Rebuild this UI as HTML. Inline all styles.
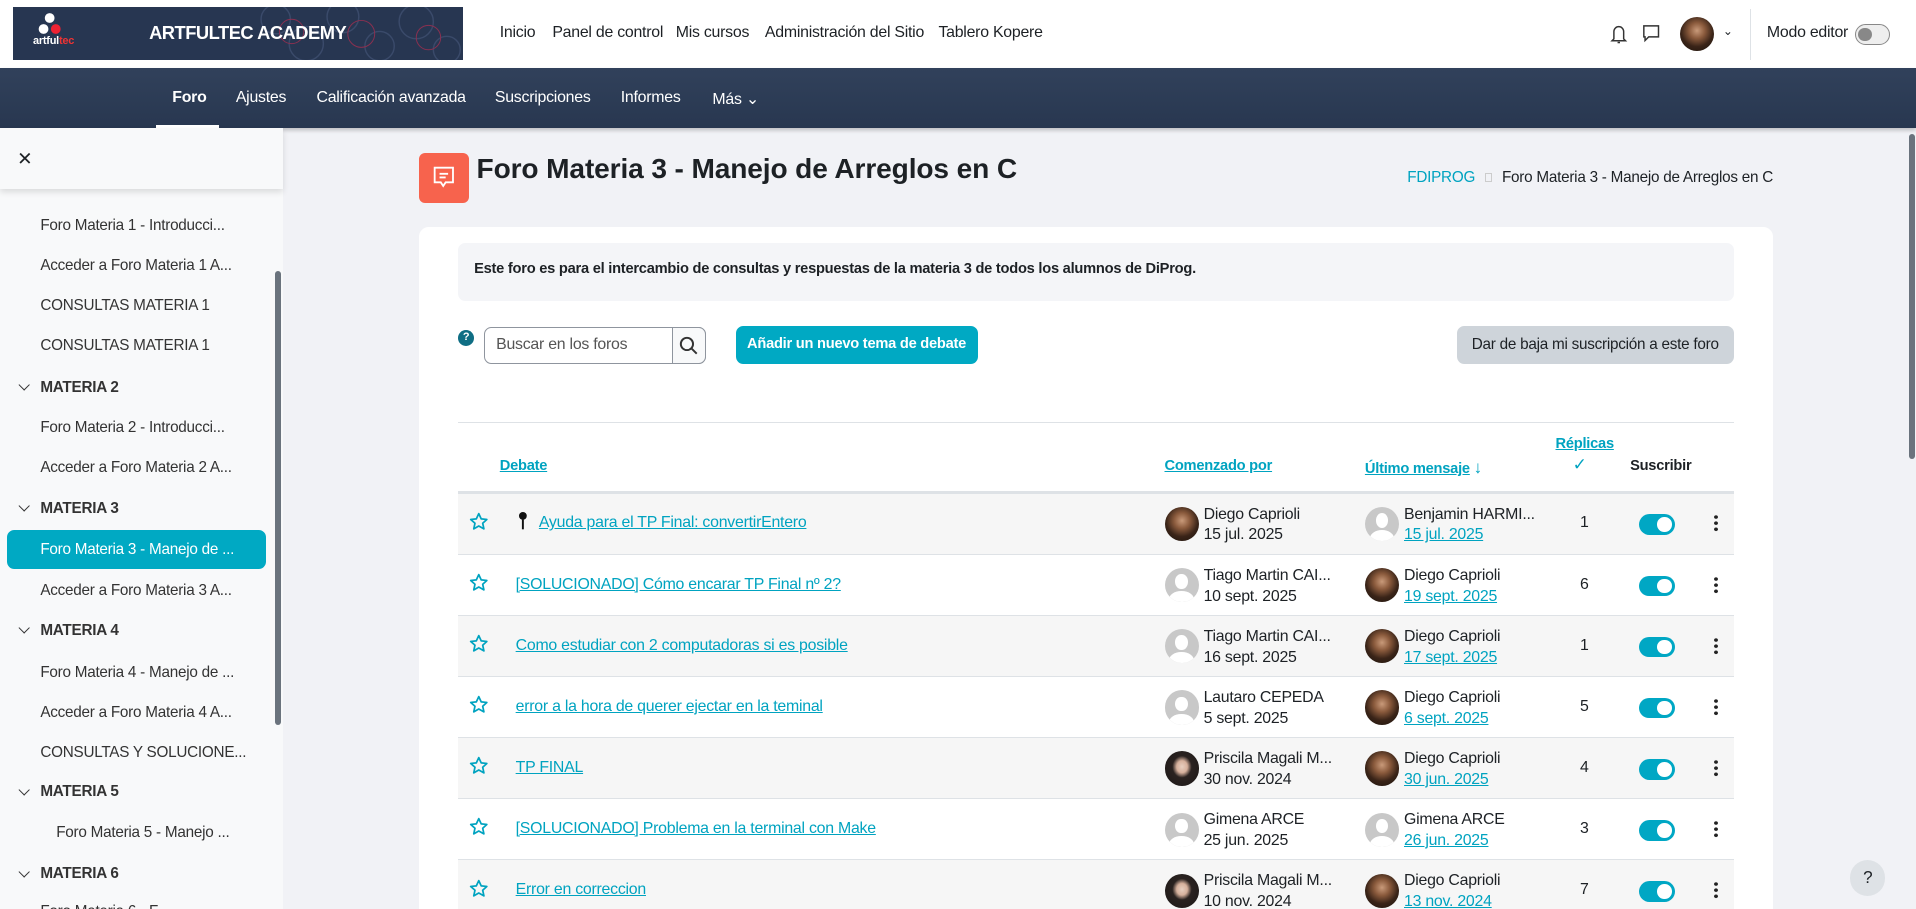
<!DOCTYPE html>
<html><head><meta charset="utf-8"><style>
*{box-sizing:border-box;margin:0;padding:0}
html,body{width:1916px;height:909px;overflow:hidden;background:#f1f2f6}
#w{position:relative;width:1568px;height:744px;zoom:1.22194;font-family:"Liberation Sans",sans-serif;font-size:13px;letter-spacing:-0.2px;color:#1d2125;overflow:hidden;background:#f1f2f6}
.a{position:absolute;white-space:nowrap}
a,.lnk{color:#00a3c0;text-decoration:underline}
.hd{left:0;top:0;width:1568px;height:56px;background:#fff}
.nav2{left:0;top:56px;width:1568px;height:49px;background:linear-gradient(#31415b,#283750);box-shadow:0 2px 3px rgba(0,0,0,.2)}
.nav2 span{position:absolute;top:17px;color:#fff;font-size:13px}
.side{left:0;top:105px;width:232px;height:639px;background:#f8f9fa}
.si{position:absolute;left:33px;color:#333;font-size:12.5px}
.sh{position:absolute;left:33px;font-weight:bold;font-size:12.5px;color:#333}
.sh:before{content:"";position:absolute;left:-17px;top:2px;width:6px;height:6px;border-right:1.5px solid #333;border-bottom:1.5px solid #333;transform:rotate(45deg)}
.row{position:absolute;left:375px;width:1044px;height:50px;border-bottom:1px solid #dee2e6}
.row.g{background:#f6f6f6}
.row>*{position:absolute}
.star{left:9px;top:15px;width:16px;height:16px}
.tt{left:47px;top:17px;color:#00a3c0;text-decoration:underline}
.av{width:28px;height:28px;border-radius:50%;top:11px;overflow:hidden}
.p{background:radial-gradient(circle at 50% 40%,#c99a7a 0,#8a5a3c 30%,#3a2418 60%,#1a120c 100%)}
.f{background:radial-gradient(ellipse at 50% 45%,#e8cfc0 0,#d6b09c 22%,#2a2220 40%,#1b1716 100%)}
.d{background:#c8c8c8}
.d:before{content:"";position:absolute;left:9px;top:5px;width:10px;height:12px;border-radius:50%;background:#fff}
.d:after{content:"";position:absolute;left:4px;top:19px;width:20px;height:14px;border-radius:50%;background:#fff}
.nm{top:9px;line-height:17px}
.tg{left:966px;top:17px;width:30px;height:17px;border-radius:9px;background:#00a7c4}
.tg:after{content:"";position:absolute;right:3px;top:2.5px;width:12px;height:12px;border-radius:50%;background:#fff}
.dots{left:1028px;top:17px;width:3px;height:15px;background:radial-gradient(circle,#222 1.3px,transparent 1.6px) 0 0/3px 5px}
.cnt{left:918px;top:17px}
</style></head><body><div id="w">
<svg width="0" height="0" style="position:absolute"><defs><symbol id="st" viewBox="0 0 16 16"><path d="M8 1.3l2 4.3 4.6.5-3.4 3.1 1 4.6L8 11.5l-4.1 2.3 1-4.6L1.4 6.1 6 5.6z" fill="none" stroke="#00a3c0" stroke-width="1.4" stroke-linejoin="round"/></symbol></defs></svg>
<div class="a hd"></div>
<div class="a" style="left:11px;top:6px;width:368px;height:43px;background:#273651;overflow:hidden">
 <svg width="368" height="43" style="position:absolute;left:0;top:0"><g fill="none" stroke="#3a4a6a" stroke-width="1.2"><circle cx="215" cy="10" r="12"/><circle cx="240" cy="30" r="14"/><circle cx="270" cy="8" r="13"/><circle cx="300" cy="32" r="12"/><circle cx="330" cy="12" r="14"/><circle cx="355" cy="35" r="11"/></g><g fill="none" stroke="#8a3050" stroke-width=".8"><circle cx="228" cy="20" r="10"/><circle cx="285" cy="22" r="11"/><circle cx="340" cy="25" r="10"/></g>
 <circle cx="30" cy="9" r="4" fill="#fff"/><circle cx="25" cy="18" r="4" fill="#fff"/><circle cx="35" cy="18" r="4" fill="#e23"/></svg>
 <div class="a" style="left:16px;top:23px;color:#fff;font-size:9px;font-weight:bold">artful<span style="color:#e33">tec</span></div>
 <div class="a" style="left:111px;top:12px;color:#fff;font-size:15px;font-weight:bold;letter-spacing:-0.4px">ARTFULTEC ACADEMY</div>
</div>
<div class="a" style="left:409px;top:20px">Inicio</div>
<div class="a" style="left:452px;top:20px">Panel de control</div>
<div class="a" style="left:553px;top:20px">Mis cursos</div>
<div class="a" style="left:626px;top:20px">Administración del Sitio</div>
<div class="a" style="left:768px;top:20px">Tablero Kopere</div>
<svg class="a" style="left:1317px;top:19px" width="16" height="18" viewBox="0 0 16 18" fill="none" stroke="#333" stroke-width="1.2"><path d="M4 13V7a4 4 0 018 0v6l1.5 1.5h-11z"/><path d="M7 16h2"/></svg>
<svg class="a" style="left:1344px;top:20px" width="15" height="15" viewBox="0 0 15 15" fill="none" stroke="#333" stroke-width="1.2"><path d="M1.5 1.5h12v9h-8l-3 3v-3h-1z"/></svg>
<div class="a av p" style="left:1375px;top:14px;width:28px;height:28px"></div>
<div class="a" style="left:1410px;top:20px;font-size:10px">⌄</div>
<div class="a" style="left:1432px;top:7px;width:1px;height:42px;background:#dee2e6"></div>
<div class="a" style="left:1446px;top:20px">Modo editor</div>
<div class="a" style="left:1518px;top:20px;width:29px;height:17px;border:1px solid #888;border-radius:9px;background:#eee"><div style="position:absolute;left:2px;top:2px;width:11px;height:11px;border-radius:50%;background:#888"></div></div>

<div class="a nav2">
 <span style="left:141px;font-weight:bold">Foro</span>
 <span style="left:193px">Ajustes</span>
 <span style="left:259px">Calificación avanzada</span>
 <span style="left:405px">Suscripciones</span>
 <span style="left:508px">Informes</span>
 <span style="left:583px">Más ⌄</span>
 <div style="position:absolute;left:128px;top:46px;width:51px;height:3px;background:#fff"></div>
</div>

<div class="a side">
 <div class="a" style="left:0;top:0;width:232px;height:50px;background:#f8f9fa;box-shadow:0 3px 5px rgba(0,0,0,.12);z-index:2"></div>
 <div class="a" style="left:14px;top:16px;font-size:15px;z-index:3">✕</div>
 <div class="a" style="left:225px;top:117px;width:5px;height:371px;border-radius:3px;background:#6a737d"></div>
 <div class="si" style="top:73px">Foro Materia 1 - Introducci...</div>
 <div class="si" style="top:105px">Acceder a Foro Materia 1 A...</div>
 <div class="si" style="top:138px">CONSULTAS MATERIA 1</div>
 <div class="si" style="top:171px">CONSULTAS MATERIA 1</div>
 <div class="sh" style="top:205px">MATERIA 2</div>
 <div class="si" style="top:238px">Foro Materia 2 - Introducci...</div>
 <div class="si" style="top:271px">Acceder a Foro Materia 2 A...</div>
 <div class="sh" style="top:304px">MATERIA 3</div>
 <div class="a" style="left:6px;top:329px;width:212px;height:32px;border-radius:6px;background:#00a9c3"></div>
 <div class="si" style="top:338px;color:#fff">Foro Materia 3 - Manejo de ...</div>
 <div class="si" style="top:371px">Acceder a Foro Materia 3 A...</div>
 <div class="sh" style="top:404px">MATERIA 4</div>
 <div class="si" style="top:438px">Foro Materia 4 - Manejo de ...</div>
 <div class="si" style="top:471px">Acceder a Foro Materia 4 A...</div>
 <div class="si" style="top:504px">CONSULTAS Y SOLUCIONE...</div>
 <div class="sh" style="top:536px">MATERIA 5</div>
 <div class="si" style="top:569px;left:46px">Foro Materia 5 - Manejo ...</div>
 <div class="sh" style="top:603px">MATERIA 6</div>
 <div class="si" style="top:634px">Foro Materia 6 - F...</div>
</div>
<div class="a" style="left:1562px;top:110px;width:5px;height:266px;border-radius:3px;background:#6a737d"></div>

<div class="a" style="left:343px;top:125px;width:41px;height:41px;border-radius:5px;background:#f7634d"></div>
<svg class="a" style="left:353px;top:134px" width="21" height="23" viewBox="0 0 21 23" fill="none" stroke="#fff" stroke-width="1.5"><path d="M3 3h15v12h-6l-2 3-2-3H3z"/><path d="M7 8h7M7 11h5"/></svg>
<div class="a" style="left:390px;top:125px;font-size:23px;font-weight:bold;letter-spacing:-0.1px">Foro Materia 3 - Manejo de Arreglos en C</div>
<div class="a" style="right:117px;top:138px;font-size:12.5px"><span style="color:#00a3c0">FDIPROG</span><span style="display:inline-block;width:6px;height:7px;border:1px solid #ccc;margin:0 8px"></span>Foro Materia 3 - Manejo de Arreglos en C</div>

<div class="a" style="left:343px;top:186px;width:1108px;height:570px;border-radius:8px;background:#fff"></div>
<div class="a" style="left:375px;top:199px;width:1044px;height:47px;border-radius:6px;background:#f4f5f8"></div>
<div class="a" style="left:388px;top:214px;font-weight:bold;font-size:12px">Este foro es para el intercambio de consultas y respuestas de la materia 3 de todos los alumnos de DiProg.</div>
<div class="a" style="left:375px;top:270px;width:13px;height:13px;border-radius:50%;background:#0f6e84;color:#fff;font-size:9px;font-weight:bold;text-align:center;line-height:13px">?</div>
<div class="a" style="left:396px;top:268px;width:182px;height:30px;border:1px solid #8f959e;border-radius:6px;background:#fff"></div>
<div class="a" style="left:550px;top:268px;width:28px;height:30px;border:1px solid #8f959e;border-radius:0 6px 6px 0;background:#f8f9fa"></div>
<svg class="a" style="left:556px;top:275px" width="16" height="16" viewBox="0 0 16 16" fill="none" stroke="#333" stroke-width="1.6"><circle cx="6.5" cy="6.5" r="5"/><path d="M10 10l4.5 4.5"/></svg>
<div class="a" style="left:406px;top:275px;color:#555">Buscar en los foros</div>
<div class="a" style="left:602px;top:267px;width:198px;height:31px;border-radius:6px;background:#00a9c3;color:#fff;text-align:center;line-height:31px;font-weight:bold;font-size:12px">Añadir un nuevo tema de debate</div>
<div class="a" style="left:1192px;top:267px;width:227px;height:31px;border-radius:6px;background:#ced4da;text-align:center;line-height:31px;font-size:12.5px">Dar de baja mi suscripción a este foro</div>
<div class="a" style="left:375px;top:345px;width:1044px;height:1px;background:#dee2e6"></div>
<div class="a lnk" style="left:409px;top:375px;font-weight:bold;font-size:12px">Debate</div>
<div class="a lnk" style="left:953px;top:375px;font-weight:bold;font-size:12px">Comenzado por</div>
<div class="a" style="left:1117px;top:375px;font-weight:bold;font-size:12px"><span class="lnk">Último mensaje</span> <span style="color:#00a3c0;font-size:14px">↓</span></div>
<div class="a lnk" style="left:1273px;top:357px;font-weight:bold;font-size:12px">Réplicas</div>
<div class="a" style="left:1287px;top:372px;color:#00a3c0;font-size:14px">✓</div>
<div class="a" style="left:1334px;top:375px;font-weight:bold;font-size:12px">Suscribir</div>
<div class="a" style="left:375px;top:402px;width:1044px;height:2px;background:#dee2e6"></div>

<div class="row g" style="top:404px"><svg class="star"><use href="#st"/></svg><svg style="left:49px;top:14px" width="8" height="16" viewBox="0 0 8 16"><circle cx="4" cy="4" r="3.2" fill="#111"/><path d="M4 7v8" stroke="#111" stroke-width="1.6"/></svg><span class="tt" style="left:66px">Ayuda para el TP Final: convertirEntero</span><div class="av p" style="left:578px"></div><div class="nm" style="left:610px">Diego Caprioli<br>15 jul. 2025</div><div class="av d" style="left:742px"></div><div class="nm" style="left:774px">Benjamin HARMI...<br><a>15 jul. 2025</a></div><span class="cnt">1</span><div class="tg"></div><div class="dots"></div></div>
<div class="row" style="top:454px"><svg class="star"><use href="#st"/></svg><span class="tt">[SOLUCIONADO] Cómo encarar TP Final nº 2?</span><div class="av d" style="left:578px"></div><div class="nm" style="left:610px">Tiago Martin CAI...<br>10 sept. 2025</div><div class="av p" style="left:742px"></div><div class="nm" style="left:774px">Diego Caprioli<br><a>19 sept. 2025</a></div><span class="cnt">6</span><div class="tg"></div><div class="dots"></div></div>
<div class="row g" style="top:504px"><svg class="star"><use href="#st"/></svg><span class="tt">Como estudiar con 2 computadoras si es posible</span><div class="av d" style="left:578px"></div><div class="nm" style="left:610px">Tiago Martin CAI...<br>16 sept. 2025</div><div class="av p" style="left:742px"></div><div class="nm" style="left:774px">Diego Caprioli<br><a>17 sept. 2025</a></div><span class="cnt">1</span><div class="tg"></div><div class="dots"></div></div>
<div class="row" style="top:554px"><svg class="star"><use href="#st"/></svg><span class="tt">error a la hora de querer ejectar en la teminal</span><div class="av d" style="left:578px"></div><div class="nm" style="left:610px">Lautaro CEPEDA<br>5 sept. 2025</div><div class="av p" style="left:742px"></div><div class="nm" style="left:774px">Diego Caprioli<br><a>6 sept. 2025</a></div><span class="cnt">5</span><div class="tg"></div><div class="dots"></div></div>
<div class="row g" style="top:604px"><svg class="star"><use href="#st"/></svg><span class="tt">TP FINAL</span><div class="av f" style="left:578px"></div><div class="nm" style="left:610px">Priscila Magali M...<br>30 nov. 2024</div><div class="av p" style="left:742px"></div><div class="nm" style="left:774px">Diego Caprioli<br><a>30 jun. 2025</a></div><span class="cnt">4</span><div class="tg"></div><div class="dots"></div></div>
<div class="row" style="top:654px"><svg class="star"><use href="#st"/></svg><span class="tt">[SOLUCIONADO] Problema en la terminal con Make</span><div class="av d" style="left:578px"></div><div class="nm" style="left:610px">Gimena ARCE<br>25 jun. 2025</div><div class="av d" style="left:742px"></div><div class="nm" style="left:774px">Gimena ARCE<br><a>26 jun. 2025</a></div><span class="cnt">3</span><div class="tg"></div><div class="dots"></div></div>
<div class="row g" style="top:704px"><svg class="star"><use href="#st"/></svg><span class="tt">Error en correccion</span><div class="av f" style="left:578px"></div><div class="nm" style="left:610px">Priscila Magali M...<br>10 nov. 2024</div><div class="av p" style="left:742px"></div><div class="nm" style="left:774px">Diego Caprioli<br><a>13 nov. 2024</a></div><span class="cnt">7</span><div class="tg"></div><div class="dots"></div></div>

<div class="a" style="left:1514px;top:704px;width:29px;height:29px;border-radius:50%;background:#dee2e6;text-align:center;line-height:29px;font-size:14px">?</div>
</div></body></html>
